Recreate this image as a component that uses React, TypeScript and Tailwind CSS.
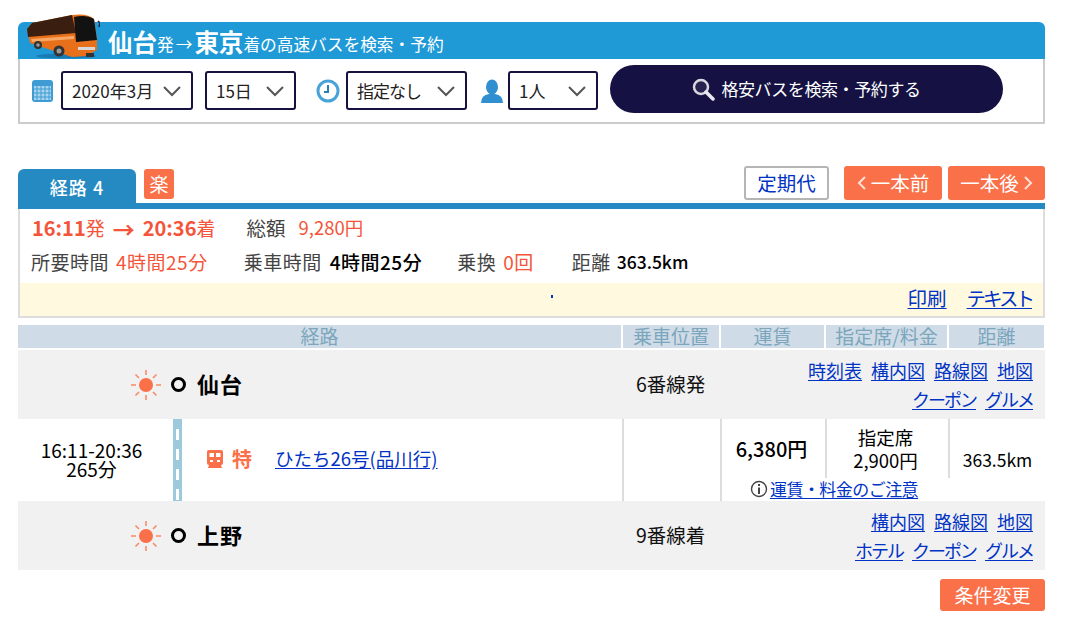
const Chevron = () => (
  <svg width="20" height="12" viewBox="0 0 20 12" className="shrink-0">
    <polyline points="2,2 10,10 18,2" fill="none" stroke="#555" strokeWidth="2" />
  </svg>
);

const SelectBox = ({ label, w }: { label: string; w: string }) => (
  <div className={`flex h-[39px] items-center justify-between rounded-[3px] border-2 border-[#15123f] bg-white pl-[9px] pr-[9px] text-[17px] text-[#222] ${w}`}>
    <span className="whitespace-nowrap">{label}</span>
    <Chevron />
  </div>
);

const Bus = () => (
  <svg width="74" height="46" viewBox="0 0 74 46" className="absolute left-[8px] top-[-9px]">
    <ellipse cx="40" cy="43" rx="30" ry="2.5" fill="#16679c" opacity="0.6" />
    <path d="M1 16 L6 10 L46 2 Q62 0 68 6 L71 26 L71 37 L60 43 L46 44 L4 30 Z" fill="#e8701a" />
    <path d="M1 16 L6 10 L46 2 L50 20 L2 24 Z" fill="#3a1e10" />
    <path d="M48 4 Q60 1 68 6 L71 27 L50 29 Z" fill="#121212" />
    <path d="M5 26 L48 23 L48 26 L6 29 Z" fill="#f7a866" />
    <path d="M72 8 L74 10 L73 14" fill="none" stroke="#222" strokeWidth="1.5" />
    <rect x="52" y="34" width="17" height="3" fill="#d8d8d8" />
    <circle cx="12" cy="32" r="4" fill="#333" />
    <circle cx="12" cy="32" r="1.8" fill="#999" />
    <circle cx="33" cy="38" r="5.5" fill="#333" />
    <circle cx="33" cy="38" r="2.5" fill="#999" />
    <rect x="60" y="40" width="8" height="4" fill="#333" />
  </svg>
);

const CalendarIcon = () => (
  <svg width="21" height="23" viewBox="0 0 21 23" className="shrink-0">
    <rect x="0" y="1" width="21" height="22" rx="3" fill="#3f9bd4" />
    <rect x="2" y="7" width="17" height="14" fill="#a9d4ee" />
    <path d="M5 7v14M9 7v14M13 7v14M17 7v14M2 10h17M2 14h17M2 18h17" stroke="#3f9bd4" strokeWidth="1" />
  </svg>
);

const ClockIcon = () => (
  <svg width="24" height="24" viewBox="0 0 24 24" className="shrink-0">
    <circle cx="12" cy="12" r="10" fill="#fff" stroke="#4aa3d8" strokeWidth="3" />
    <path d="M12 6v7h-4" fill="none" stroke="#2a7fb5" strokeWidth="2" />
  </svg>
);

const PersonIcon = () => (
  <svg width="22" height="24" viewBox="0 0 22 24" className="shrink-0">
    <ellipse cx="11" cy="8" rx="6" ry="7.5" fill="#2f8fd0" />
    <path d="M0 24 Q0 16 8 15 L14 15 Q22 16 22 24 Z" fill="#2f8fd0" />
  </svg>
);

const SearchIcon = () => (
  <svg width="23" height="23" viewBox="0 0 23 23" className="shrink-0">
    <circle cx="9" cy="9" r="7" fill="#26244f" stroke="#d8d8e0" strokeWidth="2.5" />
    <path d="M14 14 L21 21" stroke="#e8e8ee" strokeWidth="3.5" strokeLinecap="round" />
  </svg>
);

const Sun = () => (
  <svg width="30" height="30" viewBox="0 0 30 30" className="shrink-0">
    <circle cx="15" cy="15" r="7" fill="#fa7048" />
    <path d="M15 0v5M15 25v5M0 15h5M25 15h5M4.5 4.5l3.5 3.5M22 22l3.5 3.5M4.5 25.5l3.5-3.5M22 8l3.5-3.5" stroke="#fa8a68" strokeWidth="1.6" />
  </svg>
);

const TrainIcon = () => (
  <svg width="16" height="20" viewBox="0 0 16 20" className="shrink-0">
    <rect x="0" y="1" width="16" height="15" rx="2" fill="#fa7048" />
    <rect x="2.5" y="4" width="4.5" height="4" fill="#fff" />
    <rect x="9" y="4" width="4.5" height="4" fill="#fff" />
    <rect x="3" y="11" width="3" height="2" fill="#fff" />
    <rect x="10" y="11" width="3" height="2" fill="#fff" />
    <path d="M2 16l-1 3h14l-1-3z" fill="#fa7048" />
  </svg>
);

const A = ({ children, kana }: { children: React.ReactNode; kana?: boolean }) => (
  <a href="#" className={`text-[#0033c4] underline underline-offset-2 ${kana ? "tracking-[-2px]" : ""}`}>
    {children}
  </a>
);

const Head = ({ label, w }: { label: string; w: string }) => (
  <div className={`flex h-[23px] items-center justify-center bg-[#cfdbe6] text-[19px] text-[#7ba6bd] ${w}`}>
    {label}
  </div>
);

const StationRow = ({
  name,
  track,
  lines,
}: {
  name: string;
  track: string;
  lines: string[][];
}) => (
  <div className="flex h-[69px] items-center bg-[#f1f1f1]">
    <div className="flex w-[604px] items-center pl-[113px]">
      <Sun />
      <div className="ml-[10px] h-[15px] w-[15px] rounded-full border-[3px] border-black" />
      <span className="ml-[11px] pb-[2px] text-[22px] font-bold tracking-[1px] text-black">{name}</span>
    </div>
    <div className="w-[98px] whitespace-nowrap pb-[2px] pl-[14px] text-[19.5px] text-[#111]">{track}</div>
    <div className="flex flex-1 flex-col items-end gap-[5px] pr-[12px] text-[18px] leading-[24px]">
      {lines.map((line) => (
        <div key={line[0]} className="flex gap-[9px] whitespace-nowrap">
          {line.map((l) => (
            <A key={l} kana={/^[ァ-ヶー]+$/.test(l)}>{l}</A>
          ))}
        </div>
      ))}
    </div>
  </div>
);

export default function App() {
  return (
    <div className="mx-[18px] w-[1027px] pt-[22px] font-['Noto_Sans_CJK_JP','Liberation_Sans',sans-serif] font-normal">
      <div className="relative">
        <Bus />
        <div className="flex h-[37px] items-end rounded-t-[6px] bg-[#1f9ad7] pb-[2px] pl-[90px] text-[16.7px] leading-[26px] text-white">
          <b className="text-[24.5px] font-bold leading-[30px]">仙台</b>
          <span className="tracking-[2px]">発→</span>
          <b className="text-[24.5px] font-bold leading-[30px]">東京</b>
          <span>着の高速バスを検索・予約</span>
        </div>
      </div>

      <div className="flex h-[65px] items-start border-2 border-t-0 border-[#ccc] pl-[12px]">
        <div className="mt-[12px] flex items-center">
          <CalendarIcon />
          <div className="ml-[8px]"><SelectBox label="2020年3月" w="w-[132px]" /></div>
          <div className="ml-[12px]"><SelectBox label="15日" w="w-[91px]" /></div>
          <div className="ml-[20px]"><ClockIcon /></div>
          <div className="ml-[6px]"><SelectBox label="指定なし" w="w-[121px] tracking-[-1px]" /></div>
          <div className="ml-[14px]"><PersonIcon /></div>
          <div className="ml-[5px]"><SelectBox label="1人" w="w-[90px]" /></div>
        </div>
        <div className="ml-[12px] mt-[6px] flex h-[48px] w-[393px] items-center justify-center gap-[6px] rounded-[24px] bg-[#151243] text-[17px] tracking-[-0.4px] text-white">
          <SearchIcon />
          <span>格安バスを検索・予約する</span>
        </div>
      </div>

      <div className="mt-[42px] flex h-[37px] items-start justify-between">
        <div className="mt-[3px] flex items-start gap-[8px]">
          <div className="flex h-[34px] w-[118px] items-center justify-center rounded-t-[6px] bg-[#2589c2] pt-[3px] text-[18px] font-medium tracking-[1px] text-white">
            経路 4
          </div>
          <div className="flex h-[30px] w-[30px] items-center justify-center rounded-[3px] bg-[#fa7048] text-[19px] text-white">
            楽
          </div>
        </div>
        <div className="flex">
          <div className="flex h-[34px] w-[85px] items-center justify-center rounded-[3px] border-2 border-[#b5b5b5] bg-white text-[19.5px] text-[#0033c4]">
            定期代
          </div>
          <div className="ml-[15px] flex h-[34px] w-[98px] items-center justify-center gap-[4px] rounded-[3px] bg-[#fa7048] text-[19.5px] text-white">
            <svg width="10" height="16" viewBox="0 0 10 16"><polyline points="8,2 2,8 8,14" fill="none" stroke="#fde0d6" strokeWidth="2" /></svg>
            一本前
          </div>
          <div className="ml-[6px] flex h-[34px] w-[97px] items-center justify-center gap-[4px] rounded-[3px] bg-[#fa7048] text-[19.5px] text-white">
            一本後
            <svg width="10" height="16" viewBox="0 0 10 16"><polyline points="2,2 8,8 2,14" fill="none" stroke="#fde0d6" strokeWidth="2" /></svg>
          </div>
        </div>
      </div>

      <div className="border-t-[6px] border-[#2589c2]">
        <div className="border-2 border-t-0 border-[#ddd]">
          <div className="flex h-[38px] items-center pl-[12px] text-[#444]">
            <span className="text-[20px] font-bold text-[#f4553a]">16:11</span>
            <span className="text-[19px] text-[#f4553a]">発</span>
            <span className="ml-[8px] text-[22px] font-bold leading-[24px] text-[#f4553a]">→</span>
            <span className="ml-[8px] text-[20px] font-bold text-[#f4553a]">20:36</span>
            <span className="text-[19px] text-[#f4553a]">着</span>
            <span className="ml-[31px] text-[19.5px]">総額</span>
            <span className="ml-[13px] text-[18.5px] text-[#f4553a]">9,280円</span>
          </div>
          <div className="flex h-[36px] items-center pb-[6px] pl-[11px] text-[19px] tracking-[0.5px] text-[#444]">
            <span>所要時間</span>
            <span className="ml-[7px] text-[#f4553a]">4時間25分</span>
            <span className="ml-[36px]">乗車時間</span>
            <span className="ml-[8px] font-medium text-black">4時間25分</span>
            <span className="ml-[35px]">乗換</span>
            <span className="ml-[7px] text-[#f4553a]">0回</span>
            <span className="ml-[38px]">距離</span>
            <span className="ml-[6px] text-[17.5px] font-medium tracking-normal text-black">363.5km</span>
          </div>
          <div className="flex h-[33px] items-center justify-between bg-[#fff9e0] pb-[3px] pr-[11px] text-[19.5px]">
            <span className="mb-[4px] ml-[531px] h-[3px] w-[2px] bg-[#0033c4]" />
            <div className="flex gap-[20px]">
              <A>印刷</A>
              <a href="#" className="tracking-[-3px] text-[#0033c4] underline underline-offset-2">テキスト</a>
            </div>
          </div>
        </div>
      </div>

      <div className="mt-[7px] flex gap-[2px]">
        <Head label="経路" w="w-[603px]" />
        <Head label="乗車位置" w="w-[96px]" />
        <Head label="運賃" w="w-[103px]" />
        <Head label="指定席/料金" w="w-[121px]" />
        <Head label="距離" w="w-[95px]" />
      </div>

      <div className="mt-[2px]">
        <StationRow
          name="仙台"
          track="6番線発"
          lines={[["時刻表", "構内図", "路線図", "地図"], ["クーポン", "グルメ"]]}
        />

        <div className="flex h-[82px]">
          <div className="flex w-[155px] flex-col items-center pr-[8px] pt-[21px] text-[19px] leading-[19px] text-black">
            <span>16:11-20:36</span>
            <span>265分</span>
          </div>
          <div className="flex w-[9px] flex-col items-center gap-[9px] overflow-hidden bg-[#9ccadb] pt-[10px]">
            {[0, 1, 2, 3].map((i) => (
              <div key={i} className="h-[11px] w-[3px] shrink-0 bg-white" />
            ))}
          </div>
          <div className="flex w-[440px] items-center pb-[3px] pl-[25px] text-[18.5px]">
            <TrainIcon />
            <span className="ml-[9px] text-[20px] font-bold text-[#fa7048]">特</span>
            <span className="ml-[23px]"><A>ひたち26号(品川行)</A></span>
          </div>
          <div className="w-[98px] border-l-2 border-[#ddd]" />
          <div className="flex flex-1 flex-col border-l-2 border-[#ddd]">
            <div className="flex h-[59px]">
              <div className="flex w-[103px] items-center justify-center pr-[4px] text-[20px] font-medium text-black">6,380円</div>
              <div className="flex w-[123px] flex-col items-center justify-center border-l-2 border-[#ddd] pr-[4px] text-[18.5px] leading-[23px] text-black">
                <span>指定席</span>
                <span>2,900円</span>
              </div>
              <div className="flex flex-1 items-end justify-center border-l-2 border-[#ddd] pb-[5px] text-[17.5px] text-black">363.5km</div>
            </div>
            <div className="flex items-center whitespace-nowrap pl-[28px] pt-[1px] text-[17px] leading-[20px] tracking-[-0.55px]">
              <svg width="18" height="18" viewBox="0 0 18 18" className="mr-[2px] shrink-0">
                <circle cx="9" cy="9" r="7.5" fill="none" stroke="#444" strokeWidth="1.4" />
                <rect x="8" y="4" width="2" height="2" fill="#444" />
                <rect x="8" y="7.5" width="2" height="6.5" fill="#444" />
              </svg>
              <A>運賃・料金のご注意</A>
            </div>
          </div>
        </div>

        <StationRow
          name="上野"
          track="9番線着"
          lines={[["構内図", "路線図", "地図"], ["ホテル", "クーポン", "グルメ"]]}
        />
      </div>

      <div className="mt-[9px] flex justify-end">
        <div className="flex h-[32px] w-[105px] items-center justify-center rounded-[3px] bg-[#fa7048] text-[19px] text-white">
          条件変更
        </div>
      </div>
    </div>
  );
}
